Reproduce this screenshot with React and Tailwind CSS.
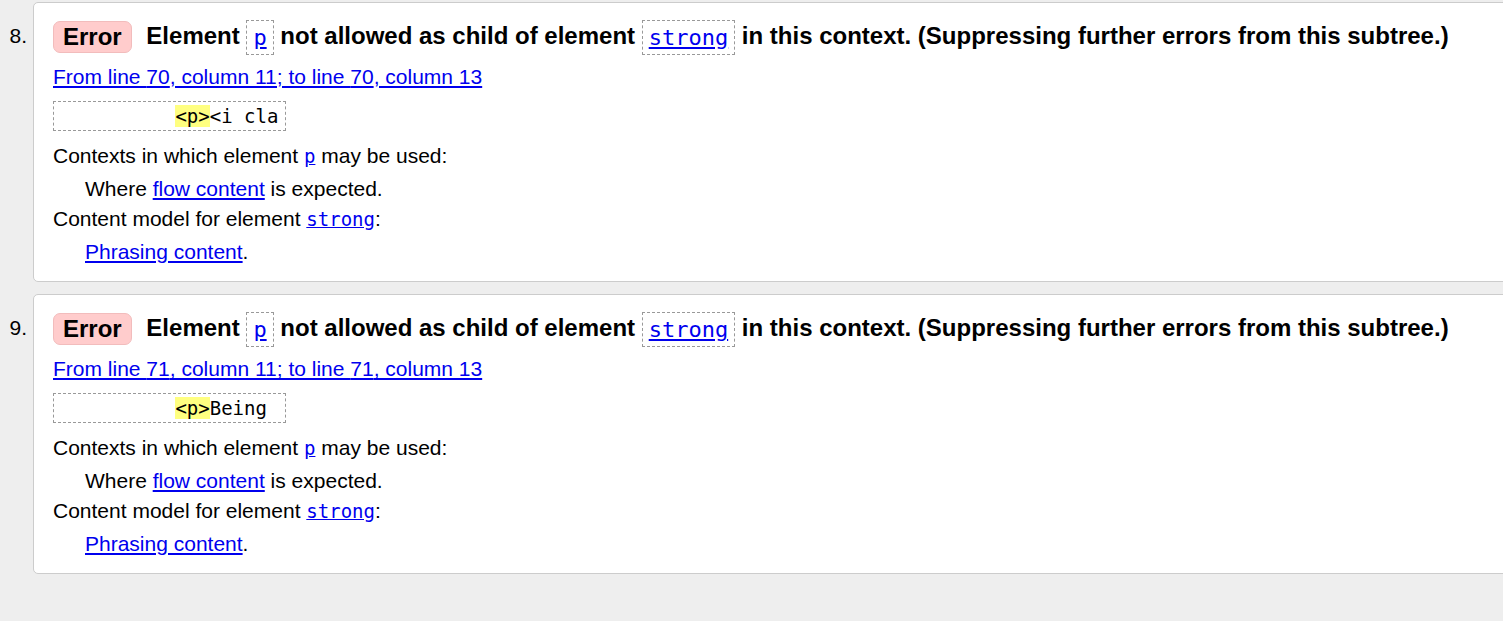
import React from 'react';

const errors = [
    { n: 8, line: 70, code: '<p>', rest: '<i cla' },
    { n: 9, line: 71, code: '<p>', rest: 'Being' },
];

const mono = { fontFamily: '"DejaVu Sans Mono", "Liberation Mono", monospace' };

const Code = ({ children, big }) => (
    <span
        className={`inline-block border border-dashed border-[#999] align-middle ${big ? 'px-[6px] py-[3px] text-[22px] leading-[27px] font-normal' : ''}`}
        style={mono}
    >
        <a className="text-[#0000ee] underline">{children}</a>
    </span>
);

const InlineCode = ({ children }) => (
    <a className="text-[#0000ee] underline text-[19px]" style={mono}>{children}</a>
);

const ErrorCard = ({ item }) => (
    <div className="flex items-start">
        <div className="w-[33px] pr-[6px] text-right text-[21px] leading-6 mt-[22px]">{item.n}.</div>
        <div className="flex-1 -mr-[40px] bg-white border border-[#ccc] rounded-[5px] pl-[19px] pt-[15px] pb-[17px]">
            <div className="text-[24px] font-bold leading-[36px] whitespace-nowrap">
                <span className="inline-block align-middle bg-[#ffcccc] border border-[#f2bcbc] rounded-[7px] px-[9px] leading-[30px] mr-[8px] -mt-[2px]">Error</span>
                {' '}Element <Code big>p</Code> not allowed as child of element <Code big>strong</Code> in this context. (Suppressing further errors from this subtree.)
            </div>
            <div className="mt-[10px] text-[21px] leading-6">
                <a className="text-[#0000ee] underline">From line {item.line}, column 11; to line {item.line}, column 13</a>
            </div>
            <div className="mt-[12px]">
                <span className="inline-block w-[233px] border border-dashed border-[#999] px-[7px] py-[2px] text-[19px] leading-[24px] whitespace-pre" style={mono}>
                    {'          '}<span className="bg-[#ffff80]">{item.code}</span>{item.rest}
                </span>
            </div>
            <div className="mt-[13px] text-[21px] leading-6">
                Contexts in which element <InlineCode>p</InlineCode> may be used:
            </div>
            <div className="mt-[9px] pl-[32px] text-[21px] leading-6">
                Where <a className="text-[#0000ee] underline">flow content</a> is expected.
            </div>
            <div className="mt-[6px] text-[21px] leading-6">
                Content model for element <InlineCode>strong</InlineCode>:
            </div>
            <div className="mt-[9px] pl-[32px] text-[21px] leading-6">
                <a className="text-[#0000ee] underline">Phrasing content</a>.
            </div>
        </div>
    </div>
);

const App = () => {
    return (
        <div
            className="w-full h-[621px] overflow-hidden bg-[#eeeeee] text-black pt-[2px]"
            style={{ fontFamily: '"Liberation Sans", Arial, sans-serif' }}
        >
            <div className="flex flex-col gap-[12px]">
                {errors.map(item => (
                    <ErrorCard key={item.n} item={item} />
                ))}
            </div>
        </div>
    );
};

export default App;
